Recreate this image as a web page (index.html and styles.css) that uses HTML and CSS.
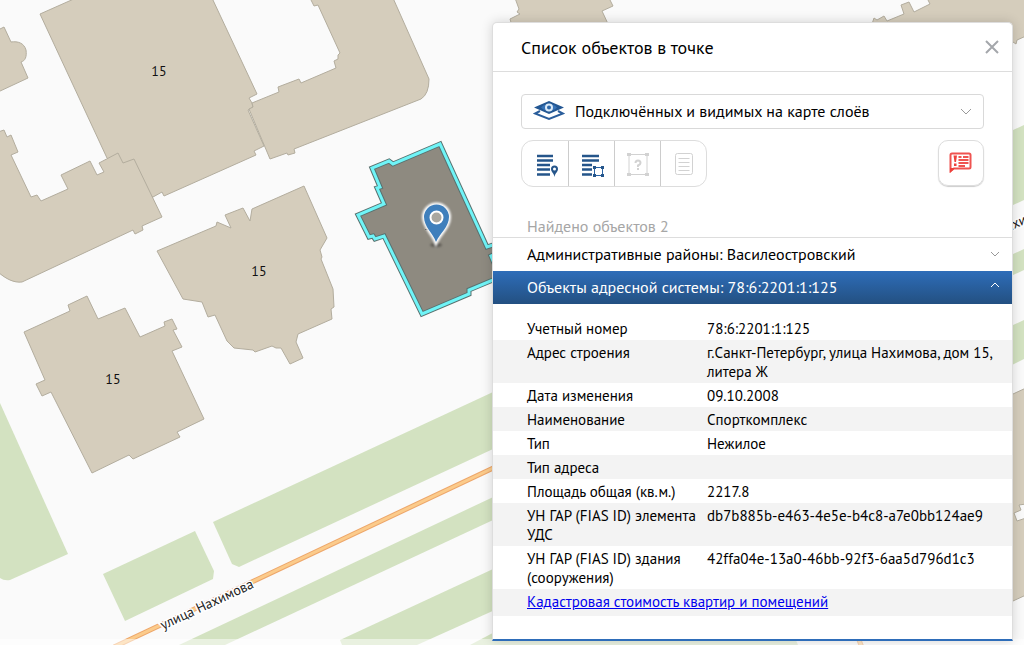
FILE: index.html
```
<!DOCTYPE html>
<html lang="ru">
<head>
<meta charset="utf-8">
<title>Список объектов в точке</title>
<link rel="stylesheet" href="styles.css">
</head>
<body>
<svg class="map" role="img" aria-label="Карта">
  <g class="green">
    <path d="M0 403 68 554 10 580Q4 581 0 578Z"/>
    <path d="M103 574 195 531 214 571 213 579 125 621Z"/>
    <path d="M213 522 506 386 506 443 239 567 232 564Z"/>
    <path d="M179 645 506 491 506 514 225 645Z"/>
    <path d="M340 640 506 563 506 605 417 645 342 645Z"/>
    <path d="M470 645 506 626 790 626 798 645Z"/>
    <path d="M1000 136 1024 125V200L1000 211Z"/>
    <path d="M1000 260 1024 249V270L1000 281Z"/>
    <path d="M1000 331 1024 320V359L1000 371Z"/>
  </g>
  <g class="building">
    <path d="M-2 30 4 27 11 42C18 41 24 43 26 50 27 57 25 61 21 62L28 78-2 92Z"/>
    <path d="M40 14 76-2H212L257 94 249 98 252 103 253 107 248 110 264 146 254 151 256 155 164 196 162 192 153 197 140 190 107 158Z"/>
    <path d="M-2 132 4 130 7 137 11 135 18 152 11 155 31 197 37 195 41 201 68 189 61 175 90 161 97 175 104 172 99 163 118 153 123 163 134 159 162 217 142 226 143 230 135 234 133 230 22 282C14 283 6 279-2 272Z"/>
    <path d="M310-2 314 6 318 5 340 53 338 55 338 59 334 61 336 68 301 83 299 79 278 87 279 92 252 103 253 107 249 109 270 159 287 153 288 155 295 153 294 149 421 99Q429 94 429 79L393-2Z"/>
    <path d="M157 251 216 226 217 222 231 228 225 215 243 208 250 221 252 209 304 186 327 238 320 250 322 257 321 259 333 289 334 307 331 309 332 319 298 334 296 342 303 358 290 364 281 348 276 348 272 346 255 352 253 350 234 348 227 341 215 315 208 317 202 302 183 299Z"/>
    <path d="M24 332 70 311 68 305 87 296 98 319 125 308 140 337 165 326 164 322 172 319 177 329 173 330 182 347 172 351 204 419 177 432 180 437 133 459 129 455 92 473 51 392 42 396 36 384 45 380Z"/>
    <path d="M515-2 519 9 517 12 520 14 510 19 512 26H609L602 11 613 6 609-2Z"/>
    <path d="M872 24 874 18 877 20 884 16 887 21 904 14 901 5 909 2 914 12 930 4 927-2H1026V36L1017 40 1016 44 1013 42 1005 44Z"/>
    <path d="M1000 400 1026 388V504L1019 505 1021 510 1014 513 1017 521 1026 518V595L1000 607Z"/>
  </g>
  <path class="outline-dark" d="M440 144 393 164 389 161 372 168 380 187 377 188 384 204 358 215 369 237 373 236 375 239 384 236 422 314 469 294 469 290 505 275 500 268 496 268 491 256 499 252 496 244 487 247Z"/>
  <path class="outline-cyan" d="M440 144 393 164 389 161 372 168 380 187 377 188 384 204 358 215 369 237 373 236 375 239 384 236 422 314 469 294 469 290 505 275 500 268 496 268 491 256 499 252 496 244 487 247Z"/>
  <path class="road-edge" d="M114 647 506 462M859 640 863 650"/>
  <path class="road" d="M114 647 506 462M859 640 863 650"/>
  <g class="house">
    <text x="159" y="76">15</text>
    <text x="259" y="276">15</text>
    <text x="113" y="384">15</text>
  </g>
  <text class="street" transform="translate(163 630) rotate(-25)">улица Нахимова</text>
  <text class="street" transform="translate(1008 232) rotate(-25)">ахи</text>
  <rect class="haze" y="639" width="100%" height="100%"/>
  <ellipse class="pin-shadow" cx="436" cy="245" rx="6" ry="2"/>
  <path class="tick" d="M425 229.500H428"/>
  <path class="pin-glow" d="M436 242C433 233 424 227 424 217A12.500 12.500 0 0 1 449 217C449 227 440 233 436 242Z"/>
  <path class="pin" fill-rule="evenodd" d="M436 242C433 233 424 227 424 217A12.500 12.500 0 0 1 449 217C449 227 440 233 436 242ZM436.500 211.500A6 6 0 1 0 436.500 223.500 6 6 0 0 0 436.500 211.500Z"/>
  <circle class="pin-ring" cx="436.500" cy="217.500" r="6"/>
</svg>

<main class="stage">
  <section class="panel" aria-labelledby="title">
    <header class="panel-head">
      <h1 id="title">Список объектов в точке</h1>
      <button class="close" aria-label="Закрыть">
        <svg width="14" height="14" viewBox="0 0 14 14"><path d="M1 1 13 13M13 1 1 13"/></svg>
      </button>
    </header>

    <div class="controls">
      <div class="layers">
        <svg class="layers-icon" width="32" height="20" viewBox="0 0 32 20">
          <path class="layer-back" d="M7 10 2 12.500 16 18 30 12.500 25 10"/>
          <path class="layer-front" d="M1 6.500 16 0 31 6.500 16 13Z"/>
          <path class="layer-eye" d="M8 6.500Q16-1 24 6.500 16 14 8 6.500Z"/>
          <circle class="layer-iris" cx="16" cy="6.500" r="3"/>
        </svg>
        <select class="layers-select" aria-label="Слои">
          <option>Подключённых и видимых на карте слоёв</option>
        </select>
        <svg class="layers-arrow" width="12" height="8" viewBox="0 0 12 8"><path d="M1 1 6 6 11 1"/></svg>
      </div>
      <div class="tools">
        <div class="group">
          <button aria-label="Объекты в точке">
            <svg width="26" height="26" viewBox="0 0 26 26">
              <path class="blue-line" d="M5 5H21M5 9.500H21M5 14H18M5 18.500H18M5 23.500H18"/>
              <path class="pin-gap" d="M22.500 26C22 22 19 21 19 18A3.500 3.500 0 0 1 26 18C26 21 23 22 22.500 26Z"/>
              <path class="blue-fill" fill-rule="evenodd" d="M22.500 26C22 22 19 21 19 18A3.500 3.500 0 0 1 26 18C26 21 23 22 22.500 26ZM22.500 16.500A1.500 1.500 0 1 0 22.500 19.500 1.500 1.500 0 0 0 22.500 16.500Z"/>
            </svg>
          </button>
          <button aria-label="Объекты в области">
            <svg width="26" height="26" viewBox="0 0 26 26">
              <path class="blue-line" d="M3 5H20M3 9.500H20M3 14H13M3 18.500H13M3 23.500H13"/>
              <path class="blue-thin" d="M15.500 16.500H23.500V24.500H15.500Z"/>
              <path class="blue-fill" d="M14 15h3v3h-3zM22 15h3v3h-3zM14 23h3v3h-3zM22 23h3v3h-3z"/>
            </svg>
          </button>
          <button disabled aria-label="Выбор области">
            <svg width="26" height="26" viewBox="0 0 26 26">
              <path class="grey-thin" d="M4 3.500H22V23.500H4Z"/>
              <path class="grey-fill" d="M2 2h4v3H2zM20 2h4v3h-4zM2 22h4v3H2zM20 22h4v3h-4z"/>
              <path class="grey-line" d="M10.500 12Q10.500 9.500 13 9.500T15.500 12Q15.500 13.500 13 14.500V16M13 17V19"/>
            </svg>
          </button>
          <button disabled aria-label="Отчёт">
            <svg width="26" height="26" viewBox="0 0 26 26">
              <rect class="grey-thin" x="4.500" y="2.500" width="17" height="21" rx="2"/>
              <path class="grey-thin" d="M7.500 7.500H18.500M7.500 11.500H18.500M7.500 15.500H18.500M7.500 19.500H18.500"/>
            </svg>
          </button>
        </div>
        <button class="report" aria-label="Сообщить об ошибке">
          <svg width="24" height="22" viewBox="0 0 24 22">
            <path class="red-line" d="M1.500 19V3Q1.500 1.500 3 1.500H20Q21.500 1.500 21.500 3V15Q21.500 16.500 20 16.500H5L1.500 19Z"/>
            <path class="red-fill" d="M4.500 3.500H8L7 10H5.500ZM5 11.500H7.500V14H5ZM1 16H6L1 21Z"/>
            <path class="red-thin" d="M9.500 5H12.500M14 5H19.500M9.500 8H19.500M9.500 11H19.500M9.500 14H16"/>
          </svg>
        </button>
      </div>
      <p class="found">Найдено объектов 2</p>
    </div>

    <button class="item" aria-expanded="false">
      <span>Административные районы: Василеостровский</span>
      <svg width="12" height="8" viewBox="0 0 12 8"><path d="M2 1 6 5 10 1"/></svg>
    </button>
    <button class="item item-open" aria-expanded="true">
      <span>Объекты адресной системы: 78:6:2201:1:125</span>
      <svg width="12" height="8" viewBox="0 0 12 8"><path d="M2 5 6 1 10 5"/></svg>
    </button>

    <table class="props">
      <tbody>
        <tr><th scope="row">Учетный номер</th><td>78:6:2201:1:125</td></tr>
        <tr><th scope="row">Адрес строения</th><td>г.Санкт-Петербург, улица Нахимова, дом 15, литера Ж</td></tr>
        <tr><th scope="row">Дата изменения</th><td>09.10.2008</td></tr>
        <tr><th scope="row">Наименование</th><td>Спорткомплекс</td></tr>
        <tr><th scope="row">Тип</th><td>Нежилое</td></tr>
        <tr><th scope="row">Тип адреса</th><td></td></tr>
        <tr><th scope="row">Площадь общая (кв.м.)</th><td>2217.8</td></tr>
        <tr><th scope="row">УН ГАР (FIAS ID) элемента УДС</th><td>db7b885b-e463-4e5e-b4c8-a7e0bb124ae9</td></tr>
        <tr><th scope="row">УН ГАР (FIAS ID) здания (сооружения)</th><td>42ffa04e-13a0-46bb-92f3-6aa5d796d1c3</td></tr>
      </tbody>
    </table>
    <p class="link-row"><a href="#cost">Кадастровая стоимость квартир и помещений</a></p>
  </section>
</main>
</body>
</html>
```
FILE: styles.css
```
* { box-sizing: border-box; }
body {
  margin: 0;
  min-height: 100vh;
  background: #fafafa;
  color: #000;
  font: 15px/19px "PT Sans", Lato, "Open Sans", sans-serif;
  overflow: hidden;
}
button, select { font: inherit; color: inherit; }
button { padding: 0; border: 0; background: none; }
h1, p { margin: 0; font-weight: 400; }
svg { display: block; fill: none; }

.map { position: absolute; inset: 0; width: 100%; height: 100%; }
.green { fill: #d3e2c1; }
.building { fill: #d5cdbc; stroke: #b3ad9e; }
.outline-dark { fill: #8e8a80; stroke: #58716f; stroke-width: 5; }
.outline-cyan { stroke: #6ff4f7; stroke-width: 3; }
.road-edge { stroke: #eda66a; stroke-width: 5; }
.road { stroke: #fbcb8b; stroke-width: 3; }
.house { fill: #111; font-size: 14px; text-anchor: middle; }
.street {
  fill: #222;
  font-size: 14px;
  stroke: #fff;
  stroke-width: 3px;
  paint-order: stroke;
}
.haze { fill: #fff; opacity: 0.5; }
.tick { stroke: #333; }
.pin-shadow { fill: #5e5b55; filter: blur(1px); }
.pin-glow { fill: #fff; stroke: #fff; stroke-width: 4; filter: blur(1px); }
.pin { fill: #3f7fbc; }
.pin-ring { fill: #aaa79f; stroke: #fff; stroke-width: 2; }

.stage {
  position: relative;
  display: flex;
  justify-content: flex-end;
  padding: 22px 11px 4px;
}
.panel {
  flex: 0 1 521px;
  border: 1px solid #ddd;
  border-bottom: 2px solid #2e6db9;
  border-radius: 5px 5px 0 0;
  background: #fff;
  box-shadow: 0 0 12px rgba(0, 0, 0, 0.16);
}
.panel-head {
  display: flex;
  align-items: center;
  justify-content: space-between;
  height: 49px;
  padding: 0 13px 0 28px;
  border-bottom: 1px solid #ddd;
}
.panel-head h1 { font-size: 18px; }
.close svg { stroke: #a4a7ab; stroke-width: 2; }

.controls { padding: 22px 28px 0; }
.layers { display: grid; align-items: center; }
.layers > * { grid-area: 1 / 1; }
.layers-select {
  width: 100%;
  height: 35px;
  padding: 0 40px 0 53px;
  border: 1px solid #d9d9d9;
  border-radius: 4px;
  background: #fff;
  appearance: none;
  font-size: 16px;
}
.layers-icon { z-index: 1; margin: 0 0 2px 12px; }
.layers-arrow { justify-self: end; margin-right: 12px; stroke: #999; }
.layer-back { stroke: #2a5d9b; stroke-width: 2; }
.layer-front { fill: #235793; }
.layer-eye { fill: #3874b8; }
.layer-iris { fill: #2f68a8; stroke: #dcebf8; stroke-width: 2; }

.tools { display: flex; justify-content: space-between; margin-top: 11px; }
.group {
  display: flex;
  border: 1px solid #ddd;
  border-radius: 12px;
  overflow: hidden;
}
.group button {
  display: grid;
  place-items: center;
  width: 46px;
  height: 45px;
}
.group button + button { border-left: 1px solid #ccc; }
.report {
  display: grid;
  place-items: center;
  width: 46px;
  height: 46px;
  border: 1px solid #ddd;
  border-radius: 10px;
  box-shadow: 0 1px 1px #ccc;
}
.blue-line { stroke: #25558a; stroke-width: 2.4; }
.blue-thin { stroke: #2c65a6; fill: #fff; }
.blue-fill { fill: #25558a; }
.pin-gap { stroke: #fff; stroke-width: 2; }
.grey-line { stroke: #d2d2d2; stroke-width: 2; }
.grey-thin { stroke: #d2d2d2; }
.grey-fill { fill: #d2d2d2; }
.red-line { stroke: #ef5350; stroke-width: 2; }
.red-thin { stroke: #ef5350; stroke-width: 2; }
.red-fill { fill: #ee403b; }
.found { margin: 28px 6px 0; color: #a6a6a6; font-size: 16px; line-height: 22px; }

.item {
  display: flex;
  align-items: center;
  justify-content: space-between;
  width: 100%;
  height: 34px;
  padding: 0 11px 0 34px;
  border-top: 1px solid #ddd;
  font-size: 16px;
  text-align: left;
}
.item svg { stroke: #999; }
.item-open {
  height: 33px;
  border-top: 0;
  background: linear-gradient(#2e6db9, #235081);
  color: #fff;
}
.item-open svg { margin-bottom: 3px; stroke: #fff; }

.props { width: 100%; margin-top: 12px; border-collapse: collapse; table-layout: fixed; }
.props tr { height: 24px; }
.props tr:nth-child(even) { background: #f3f3f3; }
.props th, .props td {
  padding: 3px 10px 2px 0;
  font-weight: 400;
  text-align: left;
  vertical-align: top;
}
.props th { width: 214px; padding-left: 34px; padding-right: 6px; }
.link-row {
  margin-bottom: 23px;
  padding: 3px 34px 5px;
  background: #f3f3f3;
}
.link-row a { color: #00e; }
```
